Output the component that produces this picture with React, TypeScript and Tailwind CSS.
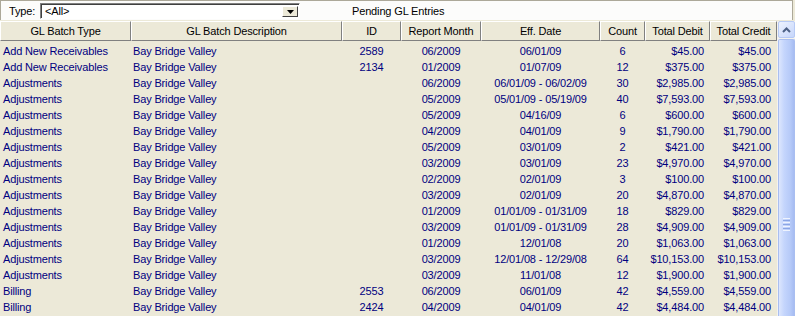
import React from "react";

type Row = {
  type: string;
  desc: string;
  id: string;
  month: string;
  eff: string;
  count: string;
  debit: string;
  credit: string;
};

const rows: Row[] = [
  { type: "Add New Receivables", desc: "Bay Bridge Valley", id: "2589", month: "06/2009", eff: "06/01/09", count: "6", debit: "$45.00", credit: "$45.00" },
  { type: "Add New Receivables", desc: "Bay Bridge Valley", id: "2134", month: "01/2009", eff: "01/07/09", count: "12", debit: "$375.00", credit: "$375.00" },
  { type: "Adjustments", desc: "Bay Bridge Valley", id: "", month: "06/2009", eff: "06/01/09 - 06/02/09", count: "30", debit: "$2,985.00", credit: "$2,985.00" },
  { type: "Adjustments", desc: "Bay Bridge Valley", id: "", month: "05/2009", eff: "05/01/09 - 05/19/09", count: "40", debit: "$7,593.00", credit: "$7,593.00" },
  { type: "Adjustments", desc: "Bay Bridge Valley", id: "", month: "05/2009", eff: "04/16/09", count: "6", debit: "$600.00", credit: "$600.00" },
  { type: "Adjustments", desc: "Bay Bridge Valley", id: "", month: "04/2009", eff: "04/01/09", count: "9", debit: "$1,790.00", credit: "$1,790.00" },
  { type: "Adjustments", desc: "Bay Bridge Valley", id: "", month: "05/2009", eff: "03/01/09", count: "2", debit: "$421.00", credit: "$421.00" },
  { type: "Adjustments", desc: "Bay Bridge Valley", id: "", month: "03/2009", eff: "03/01/09", count: "23", debit: "$4,970.00", credit: "$4,970.00" },
  { type: "Adjustments", desc: "Bay Bridge Valley", id: "", month: "02/2009", eff: "02/01/09", count: "3", debit: "$100.00", credit: "$100.00" },
  { type: "Adjustments", desc: "Bay Bridge Valley", id: "", month: "03/2009", eff: "02/01/09", count: "20", debit: "$4,870.00", credit: "$4,870.00" },
  { type: "Adjustments", desc: "Bay Bridge Valley", id: "", month: "01/2009", eff: "01/01/09 - 01/31/09", count: "18", debit: "$829.00", credit: "$829.00" },
  { type: "Adjustments", desc: "Bay Bridge Valley", id: "", month: "03/2009", eff: "01/01/09 - 01/31/09", count: "28", debit: "$4,909.00", credit: "$4,909.00" },
  { type: "Adjustments", desc: "Bay Bridge Valley", id: "", month: "01/2009", eff: "12/01/08", count: "20", debit: "$1,063.00", credit: "$1,063.00" },
  { type: "Adjustments", desc: "Bay Bridge Valley", id: "", month: "03/2009", eff: "12/01/08 - 12/29/08", count: "64", debit: "$10,153.00", credit: "$10,153.00" },
  { type: "Adjustments", desc: "Bay Bridge Valley", id: "", month: "03/2009", eff: "11/01/08", count: "12", debit: "$1,900.00", credit: "$1,900.00" },
  { type: "Billing", desc: "Bay Bridge Valley", id: "2553", month: "06/2009", eff: "06/01/09", count: "42", debit: "$4,559.00", credit: "$4,559.00" },
  { type: "Billing", desc: "Bay Bridge Valley", id: "2424", month: "04/2009", eff: "04/01/09", count: "42", debit: "$4,484.00", credit: "$4,484.00" },
];

const headers: { label: string; w: string }[] = [
  { label: "GL Batch Type", w: "w-[131px]" },
  { label: "GL Batch Description", w: "w-[211px]" },
  { label: "ID", w: "w-[59px]" },
  { label: "Report Month", w: "w-[80px]" },
  { label: "Eff. Date", w: "w-[119px]" },
  { label: "Count", w: "w-[45px]" },
  { label: "Total Debit", w: "w-[65px]" },
  { label: "Total Credit", w: "w-[67px]" },
];

export default function App() {
  return (
    <div className="w-[795px] h-[316px] overflow-hidden bg-[#ECE9D8] font-['Liberation_Sans',Arial,sans-serif] text-[11px] tracking-[-0.15px] leading-none">
      {/* top bar */}
      <div className="flex h-[20px] items-stretch bg-[#FCFCFB] border-t border-l border-[#ACA899] mr-[2px] border-r">
        <div className="w-[39px] flex items-center pl-[8px] pt-[1px] text-black">Type:</div>
        <div className="w-[260px] mt-[2px] mb-[1px] flex border-t border-l border-[#808080] border-b border-r border-b-white border-r-white">
          <div className="flex-1 flex border-t border-l border-[#404040] bg-white">
            <div className="flex-1 flex items-center pl-[3px] text-black">&lt;All&gt;</div>
            <div className="w-[16px] mt-[1px] mb-[1px] mr-[1px] bg-[#ECE9D8] border-t border-l border-white border-b border-r border-b-[#404040] border-r-[#404040] flex items-center justify-center">
              <svg width="7" height="4" viewBox="0 0 7 4">
                <path d="M0 0h7L3.5 4z" fill="#000" />
              </svg>
            </div>
          </div>
        </div>
        <div className="flex-1 flex items-center pl-[52px] pt-[1px] text-black">Pending GL Entries</div>
      </div>
      <div className="h-[1px]" />
      {/* grid */}
      <div className="flex">
        <div className="w-[777px]">
          <div className="flex h-[20px] bg-[#ECE9D8]">
            {headers.map((h, i) => (
              <div
                key={i}
                className={`${h.w} flex items-center justify-center pt-[1px] text-black border-t border-l border-white border-r border-b border-r-[#808080] border-b-[#808080]`}
              >
                {h.label}
              </div>
            ))}
          </div>
          <div className="text-[#000080] pt-[2px]">
            {rows.map((r, i) => (
              <div key={i} className="flex h-[16px] items-center">
                <div className="w-[131px] pl-[3px] whitespace-nowrap">{r.type}</div>
                <div className="w-[211px] pl-[2px] whitespace-nowrap">{r.desc}</div>
                <div className="w-[59px] text-center">{r.id}</div>
                <div className="w-[80px] text-center">{r.month}</div>
                <div className="w-[119px] text-center whitespace-nowrap">{r.eff}</div>
                <div className="w-[45px] text-center">{r.count}</div>
                <div className="w-[65px] text-right pr-[6px]">{r.debit}</div>
                <div className="w-[67px] text-right pr-[6px]">{r.credit}</div>
              </div>
            ))}
          </div>
        </div>
        {/* scrollbar */}
        <div className="w-[18px] h-[295px] bg-[#F4F3EE] flex flex-col pl-[1px]">
          <div className="h-[17px] w-[17px] rounded-[2px] border border-[#B7CAF5] bg-[linear-gradient(135deg,#EEF3FE,#C6D6FB)] flex items-center justify-center">
            <svg width="9" height="6" viewBox="0 0 9 6">
              <path d="M1 5 L4.5 1.5 L8 5" stroke="#4D6185" strokeWidth="2" fill="none" />
            </svg>
          </div>
          <div className="mt-[1px] flex-1 rounded-t-[2px] border border-b-0 border-[#A9BEF0] bg-[linear-gradient(to_right,#DCE6FD,#C4D5FC_35%,#B6CAF8_75%,#A6BCF2)] flex flex-col items-center pt-[178px] gap-[1px]">
            <div className="w-[7px] h-[1px] bg-[#EEF3FE]" />
            <div className="w-[7px] h-[1px] bg-[#8CA6E4]" />
            <div className="w-[7px] h-[1px] bg-[#EEF3FE]" />
            <div className="w-[7px] h-[1px] bg-[#8CA6E4]" />
            <div className="w-[7px] h-[1px] bg-[#EEF3FE]" />
            <div className="w-[7px] h-[1px] bg-[#8CA6E4]" />
            <div className="w-[7px] h-[1px] bg-[#EEF3FE]" />
          </div>
        </div>
      </div>
    </div>
  );
}
